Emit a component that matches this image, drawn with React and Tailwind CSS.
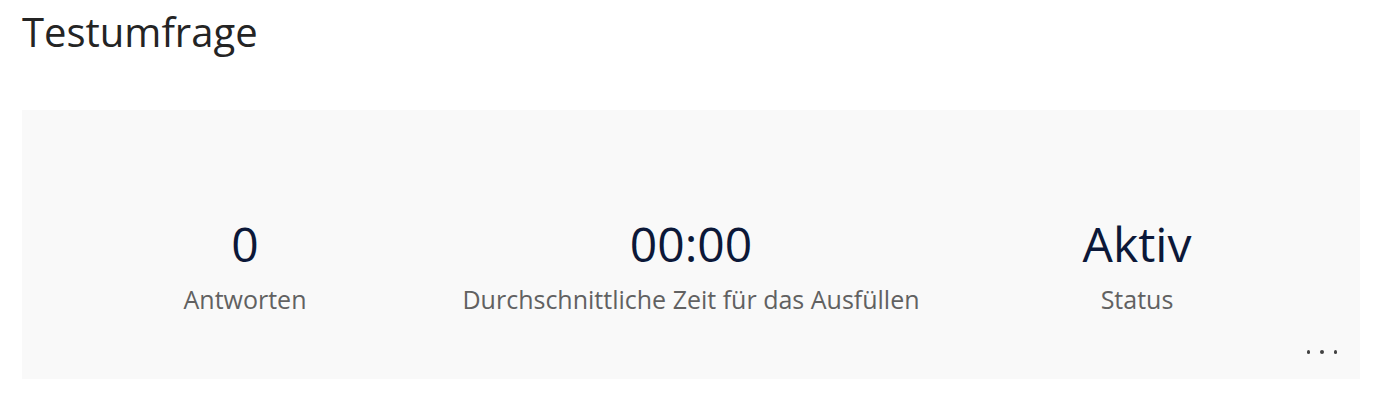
import React from "react";

const STATS = [
  { value: "0", label: "Antworten" },
  { value: "00:00", label: "Durchschnittliche Zeit für das Ausfüllen" },
  { value: "Aktiv", label: "Status" },
];

export default function App() {
  return (
    <div className="min-h-screen bg-white px-[22px]" style={{ fontFamily: "'Open Sans', 'Noto Sans', sans-serif" }}>
      <h1 className="pt-[8px] text-[40px] leading-[48px] text-[#242424]">Testumfrage</h1>

      <div className="mt-[54px] h-[269px] bg-[#f9f9f9] flex flex-col">
        <div className="grid grid-cols-3 pt-[109px]">
          {STATS.map(s => (
            <div key={s.label} className="flex flex-col items-center">
              <div className="text-[48px] leading-[50px] text-[#0c1838]">{s.value}</div>
              <div className="mt-[18px] text-[25px] leading-[25px] text-[#616161] whitespace-nowrap">{s.label}</div>
            </div>
          ))}
        </div>
        <div className="flex justify-end pr-[23px] mt-auto pb-[25px]">
          <button className="flex items-center gap-[10px] h-[4px]">
            <span className="w-[3.5px] h-[3.5px] rounded-full bg-[#424242]" />
            <span className="w-[3.5px] h-[3.5px] rounded-full bg-[#424242]" />
            <span className="w-[3.5px] h-[3.5px] rounded-full bg-[#424242]" />
          </button>
        </div>
      </div>
    </div>
  );
}
